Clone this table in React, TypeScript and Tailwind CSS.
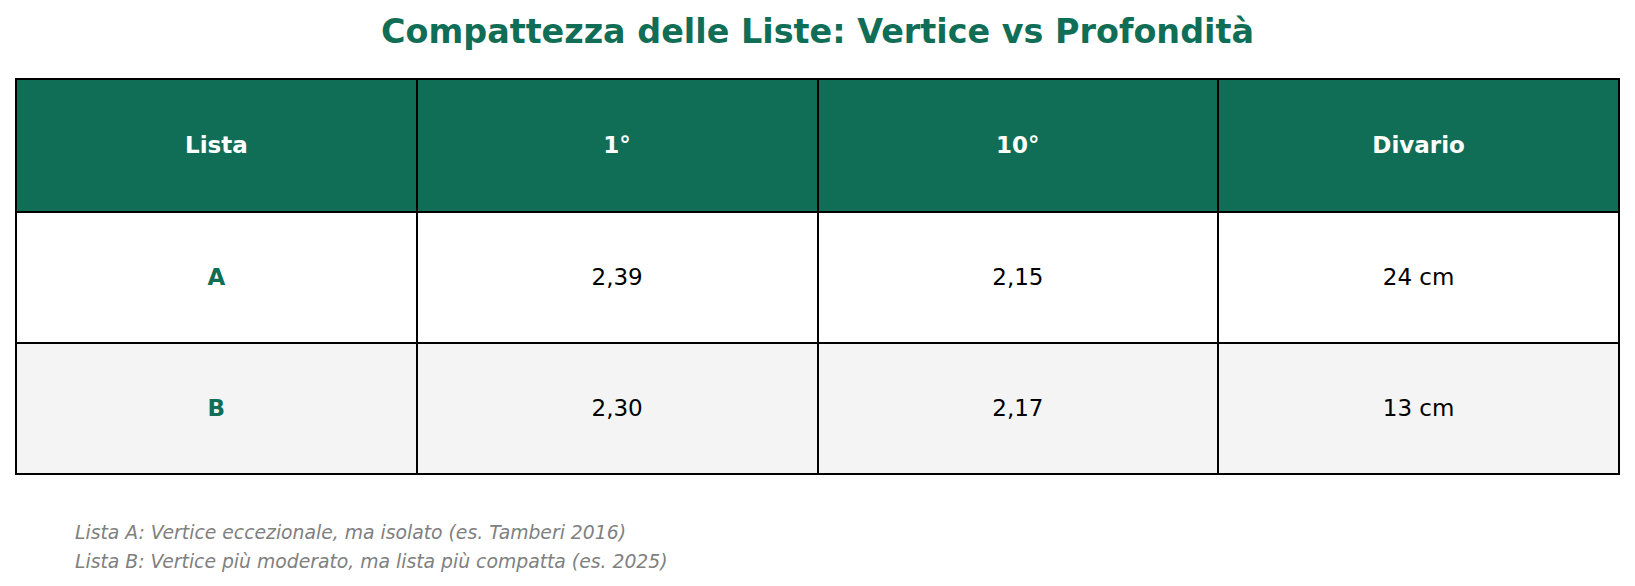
const rows = [
  { lista: "A", primo: "2,39", decimo: "2,15", divario: "24 cm", bg: "bg-white" },
  { lista: "B", primo: "2,30", decimo: "2,17", divario: "13 cm", bg: "bg-[#f4f4f4]" },
]

export default function App() {
  return (
    <div className="w-[1635px] h-[586px] bg-white font-['DejaVu_Sans',sans-serif] overflow-hidden">
      {/* Title */}
      <h1 className="h-[78px] pb-[14px] flex items-center justify-center text-[33.4px] font-bold text-[#106e56]">
        Compattezza delle Liste: Vertice vs Profondità
      </h1>

      {/* Table */}
      <div className="px-[15px]">
        <table className="w-full table-fixed border-collapse border-2 border-black">
          <thead>
            <tr className="h-[133px] bg-[#106e56]">
              {["Lista", "1°", "10°", "Divario"].map((h) => (
                <th key={h} className="border-2 border-black text-white text-[23px] font-bold text-center">
                  {h}
                </th>
              ))}
            </tr>
          </thead>
          <tbody>
            {rows.map((r) => (
              <tr key={r.lista} className={`h-[131px] ${r.bg}`}>
                <td className="border-2 border-black text-center text-[23px] font-bold text-[#106e56]">{r.lista}</td>
                <td className="border-2 border-black text-center text-[23px] text-black">{r.primo}</td>
                <td className="border-2 border-black text-center text-[23px] text-black">{r.decimo}</td>
                <td className="border-2 border-black text-center text-[23px] text-black">{r.divario}</td>
              </tr>
            ))}
          </tbody>
        </table>
      </div>

      {/* Notes */}
      <div className="pt-[43px] pl-[75px] text-[18.8px] italic text-[#808080] leading-[29px]">
        <p>Lista A: Vertice eccezionale, ma isolato (es. Tamberi 2016)</p>
        <p>Lista B: Vertice più moderato, ma lista più compatta (es. 2025)</p>
      </div>
    </div>
  )
}
